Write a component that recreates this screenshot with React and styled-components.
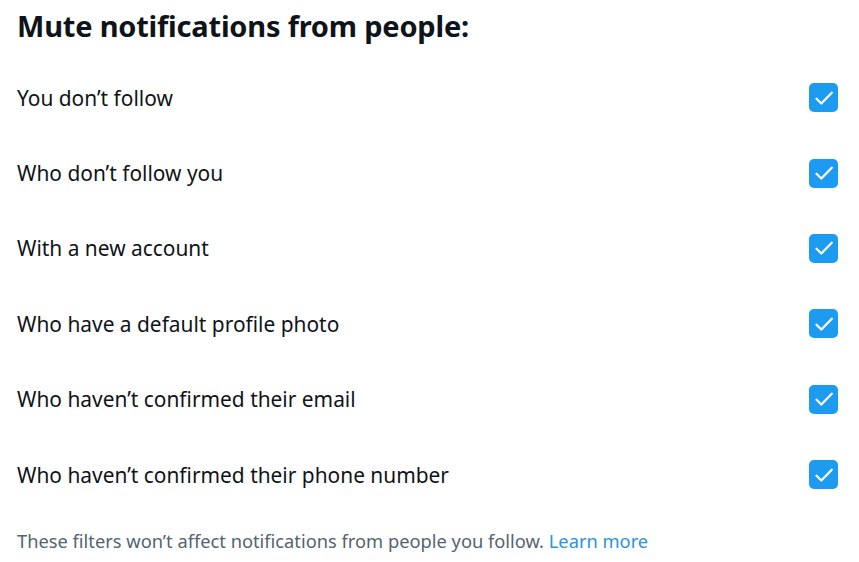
import styled, { createGlobalStyle } from "styled-components";

const GlobalStyle = createGlobalStyle`
  html, body {
    margin: 0;
    padding: 0;
    background: #ffffff;
  }
  body {
    font-family: "Noto Sans", "Open Sans", sans-serif;
    color: #0f1419;
  }
`;

const Page = styled.div`
  width: 859px;
  height: 562px;
  box-sizing: border-box;
  padding: 8px 21px 0 17px;
  display: flex;
  flex-direction: column;
`;

const Title = styled.h2`
  margin: 0;
  font-size: 29px;
  font-weight: 700;
  line-height: 36px;
  letter-spacing: -0.2px;
  color: #0f1419;
`;

const List = styled.div`
  display: flex;
  flex-direction: column;
  margin-top: 16px;
`;

const Row = styled.label`
  display: flex;
  align-items: center;
  justify-content: space-between;
  height: 75.4px;
  cursor: pointer;
`;

const RowLabel = styled.span`
  font-size: 20.9px;
  line-height: 26px;
  color: #0f1419;
`;

const Box = styled.span`
  width: 29px;
  height: 29px;
  border-radius: 5px;
  background: ${({ checked }) => (checked ? "#1d9bf0" : "transparent")};
  border: ${({ checked }) => (checked ? "none" : "2px solid #536471")};
  display: flex;
  align-items: center;
  justify-content: center;
`;

const Note = styled.p`
  margin: 17px 0 0;
  font-size: 18.3px;
  line-height: 24px;
  color: #536471;
`;

const Link = styled.a`
  color: #2a95dc;
  text-decoration: none;
`;

const items = [
  "You don’t follow",
  "Who don’t follow you",
  "With a new account",
  "Who have a default profile photo",
  "Who haven’t confirmed their email",
  "Who haven’t confirmed their phone number",
];

const Check = () => (
  <svg width="24" height="24" viewBox="0 0 24 24" fill="none">
    <path
      d="M4.5 12.8l4.8 4.7L19.8 6.8"
      stroke="#ffffff"
      strokeWidth="2.3"
      strokeLinecap="round"
      strokeLinejoin="round"
    />
  </svg>
);

const App = () => {
  return (
    <Page>
      <GlobalStyle />
      <Title>Mute notifications from people:</Title>
      <List>
        {items.map((text) => (
          <Row key={text}>
            <RowLabel>{text}</RowLabel>
            <Box checked>
              <Check />
            </Box>
          </Row>
        ))}
      </List>
      <Note>
        These filters won’t affect notifications from people you follow.{" "}
        <Link href="#">Learn more</Link>
      </Note>
    </Page>
  );
};

export default App;
